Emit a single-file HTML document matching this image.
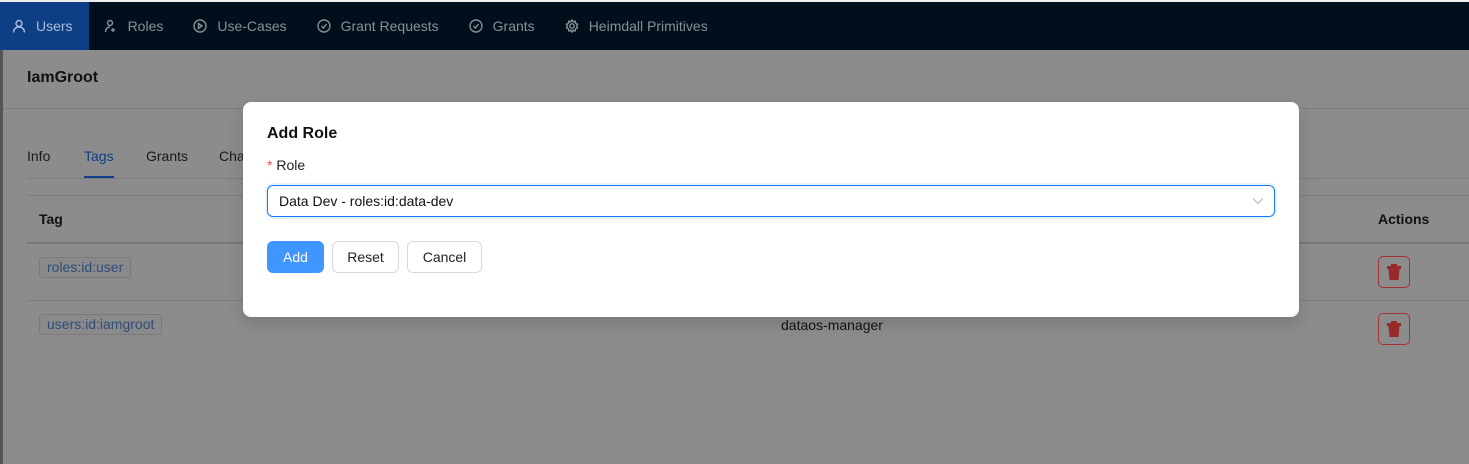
<!DOCTYPE html>
<html><head><style>
*{box-sizing:border-box;margin:0;padding:0}
body{width:1469px;height:464px;overflow:hidden;font-family:"Liberation Sans",Roboto,sans-serif;background:#8c8c8c;position:relative;font-size:14px;color:#111}
.nav{position:absolute;left:0;top:2px;width:1469px;height:48px;background:#010f1d;display:flex;align-items:center}
.topline{position:absolute;left:0;top:0;width:1469px;height:2px;background:#eee}
.nav .it{height:48px;display:flex;align-items:center;padding:0 15px;color:#8a8f96;font-size:14px;gap:10px}
.nav .it.act{background:#0e3e84;color:#a9bedb;padding-left:12px;padding-right:16px}
.nav svg{width:14px;height:14px;fill:none;stroke:currentColor;stroke-width:1.4}
.lstrip{position:absolute;left:0;top:50px;width:3px;height:414px;background:#555}
.abs{position:absolute}
.line{position:absolute;height:1px;background:#7c7c7c}
.tag{position:absolute;border:1px solid #7a7a7a;border-radius:3px;color:#2f4d7a;padding:0 7px;height:21px;line-height:19px;font-size:14px;background:#8a8a8a}
.del{position:absolute;width:32px;height:32px;border:1px solid #a83333;border-radius:5px;display:flex;align-items:center;justify-content:center}
.modal{position:absolute;left:243px;top:102px;width:1056px;height:215px;background:#fff;border-radius:8px;box-shadow:0 6px 16px rgba(0,0,0,.15)}
.btn{position:absolute;top:139px;height:32px;border:1px solid #d9d9d9;border-radius:6px;font-size:14px;display:flex;align-items:center;justify-content:center;color:#222;background:#fff}
</style></head><body>
<div class="topline"></div>
<div class="nav">
<div class="it act"><svg viewBox="0 0 14 14"><circle cx="7" cy="4.5" r="3"/><path d="M1.5 13.5c0-3.5 2.5-5.5 5.5-5.5s5.5 2 5.5 5.5"/></svg>Users</div>
<div class="it"><svg viewBox="0 0 14 14"><circle cx="6" cy="4" r="2.5"/><path d="M1.5 13c0-3 2-5 4.5-5M9 9v4M7 11h4"/></svg>Roles</div>
<div class="it"><svg viewBox="0 0 14 14"><circle cx="7" cy="7" r="6"/><path d="M5.5 4.5l3.5 2.5-3.5 2.5z"/></svg>Use-Cases</div>
<div class="it"><svg viewBox="0 0 14 14"><circle cx="7" cy="7" r="6"/><path d="M4.5 7l2 2 3-4"/></svg>Grant Requests</div>
<div class="it"><svg viewBox="0 0 14 14"><circle cx="7" cy="7" r="6"/><path d="M4.5 7l2 2 3-4"/></svg>Grants</div>
<div class="it"><svg viewBox="0 0 14 14"><circle cx="7" cy="7" r="2.2"/><path d="M7 1l1.2 1.8 2-.6.4 2.1 1.9 1-.9 1.7.9 1.7-1.9 1-.4 2.1-2-.6L7 13l-1.2-1.8-2 .6-.4-2.1-1.9-1 .9-1.7-.9-1.7 1.9-1 .4-2.1 2 .6z"/></svg>Heimdall Primitives</div>
</div>
<div class="lstrip"></div>
<div class="abs" style="left:27px;top:69px;font-size:16px;font-weight:bold;color:#111">IamGroot</div>
<div class="line" style="left:3px;top:108px;width:1466px"></div>
<div class="abs" style="left:27px;top:148px;color:#1a1a1a">Info</div>
<div class="abs" style="left:84px;top:148px;color:#103f85">Tags</div>
<div class="abs" style="left:84px;top:176px;width:30px;height:2px;background:#103f85"></div>
<div class="abs" style="left:146px;top:148px;color:#1a1a1a">Grants</div>
<div class="abs" style="left:219px;top:148px;color:#1a1a1a">Cha</div>
<div class="line" style="left:27px;top:178px;width:1442px"></div>
<div class="line" style="left:27px;top:195px;width:1442px"></div>
<div class="abs" style="left:39px;top:211px;font-weight:bold;color:#111">Tag</div>
<div class="abs" style="left:1378px;top:211px;font-weight:bold;color:#111">Actions</div>
<div class="line" style="left:27px;top:242px;width:1442px;height:2px;background:#777"></div>
<div class="tag" style="left:39px;top:257px">roles:id:user</div>
<div class="line" style="left:27px;top:300px;width:1442px"></div>
<div class="tag" style="left:39px;top:314px">users:id:iamgroot</div>
<div class="abs" style="left:781px;top:317px;color:#111">dataos-manager</div>
<div class="del" style="left:1378px;top:256px"><svg width="14" height="16" viewBox="0 0 14 16"><rect x="4" y="0" width="6" height="2" fill="#992a2a"/><rect x="0" y="2" width="14" height="3" fill="#992a2a"/><path d="M1.5 5h11l-1 11h-9z" fill="#992a2a"/></svg></div>
<div class="del" style="left:1378px;top:313px"><svg width="14" height="16" viewBox="0 0 14 16"><rect x="4" y="0" width="6" height="2" fill="#992a2a"/><rect x="0" y="2" width="14" height="3" fill="#992a2a"/><path d="M1.5 5h11l-1 11h-9z" fill="#992a2a"/></svg></div>
<div class="modal">
<div class="abs" style="left:24px;top:23px;font-size:16px;font-weight:bold;color:#111">Add Role</div>
<div class="abs" style="left:24px;top:55px;color:#222"><span style="color:#ff4d4f">*</span> Role</div>
<div class="abs" style="left:24px;top:83px;width:1008px;height:32px;border:1px solid #1677ff;border-radius:6px;box-shadow:0 0 0 2px rgba(5,145,255,.1);padding:0 11px;line-height:30px;color:#111">Data Dev - roles:id:data-dev
<svg style="position:absolute;right:10px;top:10px" width="12" height="10" viewBox="0 0 12 10"><path d="M1 2.5l5 5 5-5" fill="none" stroke="#bbb" stroke-width="1.2"/></svg></div>
<div class="btn" style="left:24px;width:57px;background:#4096ff;border-color:#4096ff;color:#fff">Add</div>
<div class="btn" style="left:89px;width:67px">Reset</div>
<div class="btn" style="left:164px;width:75px">Cancel</div>
</div>
</body></html>
